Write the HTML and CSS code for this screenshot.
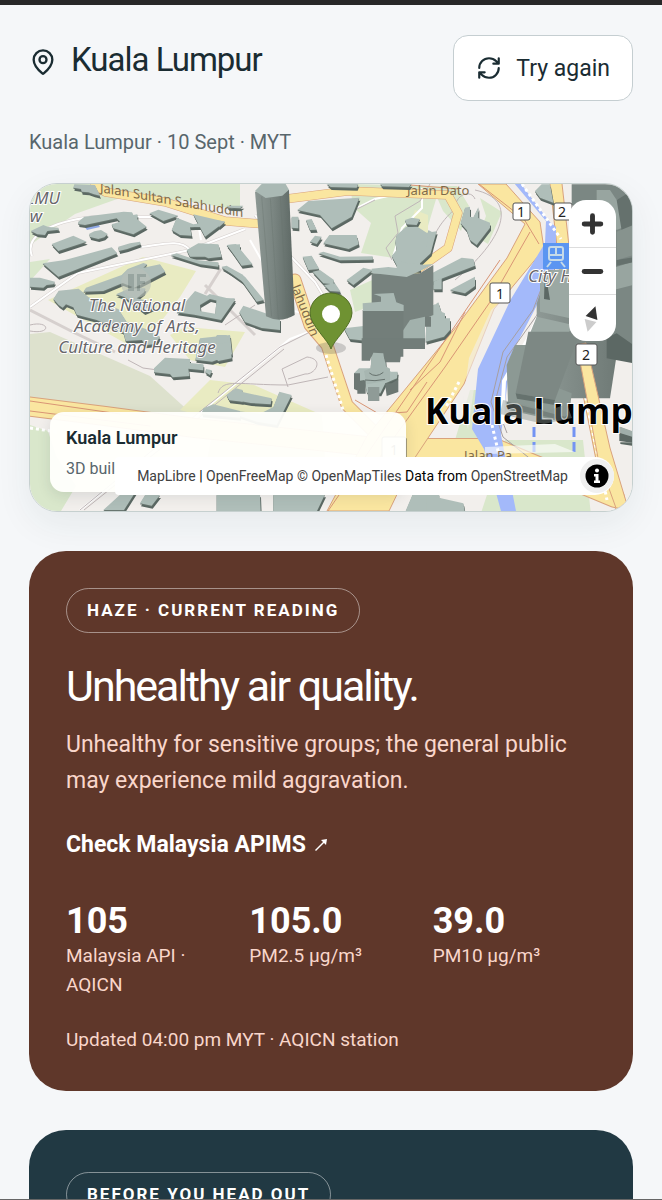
FILE: index.html
```html
<!DOCTYPE html>
<html lang="en">
<head>
<meta charset="utf-8">
<meta name="viewport" content="width=device-width, initial-scale=1">
<title>Kuala Lumpur air quality</title>
<link rel="stylesheet" href="styles.css">
</head>
<body>
<main class="page">
  <header class="header">
    <h1 class="title">
      <svg class="title-icon" viewBox="0 0 24 24" aria-hidden="true"><path d="M20 10c0 4.99-5.54 10.19-7.4 11.8a1 1 0 0 1-1.2 0C9.54 20.19 4 14.99 4 10a8 8 0 0 1 16 0"/><circle cx="12" cy="10" r="3"/></svg>
      Kuala Lumpur
    </h1>
    <button class="retry" type="button">
      <svg class="retry-icon" viewBox="0 0 24 24" aria-hidden="true"><path d="M3 12a9 9 0 0 1 9-9 9.75 9.75 0 0 1 6.74 2.74L21 8M21 3v5h-5M21 12a9 9 0 0 1-9 9 9.75 9.75 0 0 1-6.74-2.74L3 16M8 16H3v5"/></svg>
      Try again
    </button>
  </header>
  <p class="subtitle">Kuala Lumpur · 10 Sept · MYT</p>

  <section class="map" aria-label="Map of Kuala Lumpur">
    <svg class="map-canvas" viewBox="30 184 602 327" preserveAspectRatio="xMidYMid slice">
      <defs>
        <linearGradient id="tower" x1="0" x2="1"><stop offset="0" stop-color="#8c9793"/><stop offset=".45" stop-color="#7b8682"/><stop offset="1" stop-color="#5c6763"/></linearGradient>
        <linearGradient id="face" x1="0" x2="1"><stop offset="0" stop-color="#8e9995"/><stop offset="1" stop-color="#6f7a76"/></linearGradient>
        <g id="roofs">
          <g transform="translate(20 175) scale(.33333)">
            <path d="M163 28l62 2 15 32-18-4-17-6-20-2-2-8-23-4z"/>
            <path d="M175 140l18-15 118-15 25 2 4 8 12-2v15l28 22-24 14-16 9-60-18-5-12 25-8-10-10-95 20-20-3z"/>
            <path d="M388 115l27-11 60 18-45 16z"/><path d="M95 207l65-25 40 18-85 28z"/>
            <path d="M68 265l67-10 140-38 17 18-177 70z"/><path d="M208 176l15-7 20-4 20 12-10 10-18 5-25-6z"/>
            <path d="M455 165l15-37 50 20 20-3v10l-30 2 5 25-35-2zM520 118l95 22-60 45z"/>
            <path d="M500 225l35-20 60 3 10 37-40 5-10-5-45 0z"/><path d="M452 240l18-5 60 20 65 7v13l-55-7z"/>
            <path d="M605 275l15-3 50 28v22zM620 210l40-2v52zM295 215l35-10 30-5 2 8-40 14-25 6z"/>
            <path d="M32 168l38-18 15 6 30 2 2 6-35 4-7 12-23-2zM30 308l30 0 45 12-5 8-20 2-10 8-40-3z"/>
            <path d="M190 350l8-12 107-38 18-18 47-18 12 4-12 10 50-10 16 22-96 50 36 0-4 12-22 18 45 10 8 18-30 13-60-45-25-8 50-22-30-12-58 24z"/>
            <path d="M100 372l16-25 60-6 30 26 90 36 24 37 65 25 35 20-14 22-31 4-9-16-49 3-7-28-80-35-60-16-10-22-22-9-10 10-12-8z"/>
            <path fill-rule="evenodd" d="M470 412l55-64 36 14 8-5 76 18-42 60-80-16zm72-3l48 8 22-35-42-10-30 18z"/>
            <path d="M540 490l90-10 6 58-60 22-50-6z"/>
          </g>
          <g transform="translate(220 175) scale(.33333)">
            <path d="M232 105l33-27 153-10-23 57-60 35-35-40z"/><path d="M215 125l20 0v35l-20-2zM258 135l17-3 15 32-20 1zM270 200l15-18 20 3-15 22z"/>
            <path d="M310 205l18-25 82 0 6 28-30 14-66-15zM295 235l15-5 50 15 98-1v10l-98 2zM248 245l27-3 23 40-33 3zM278 290l22-5 42 30-2 13-30-3zM312 330l33-5 17 25-32-2z"/>
            <path d="M380 315l50-37 28 7-58 45zM22 210l26-3 50 61-33 4zM5 278l15-3 55 30 57 70-22 5-50-70zM-10 370l55 0-50 58-10-6zM-10 480l30 0 12 60h-42z"/>
            <path d="M20 92l50 0-10 8-34-2zM-10 135l25 5-18 16zM555 135l20-7 25 4-10 18-30-2zM58 412l12-20 110 38v35l-55-6-50-18z"/>
            <path d="M320 26l95 0-5 12-78-2zM480 26l95 0-8 10-80-2zM372 460l65-8v45l-48-5zM640 320l25-12v35l-25 0zM630 400l25-18 20 65-35 10z"/>
            <path d="M530 180l28-24 34-1 28 18 30-4-10 35-8 31-32 30v20l-65-5-20-37 15-18-4-25z"/>
          </g>
          <g transform="translate(430 175) scale(.33333)">
            <path d="M105 98l15-3v30l10 2 15-30 0 32 35 14 0 15-40 52-20-15-10-30-18-20zM-5 300l100-52 35 4 5 20-140 54zM60 345l75-40v28l-30 22zM315 48l20-20 25 0 10 55-40-15zM-10 400l25-12 0 15 30 12v15l15 0v35l-18 20-55 15z"/>
            <path d="M-5 165l18 10-8 35-15 5z"/>
          </g>
          <g transform="translate(20 345) scale(.33333)">
            <path d="M402 70l33-32 75 4v12l40 4v18l-45-5 3 22-50 4-8-10-48-5zM558 72l18 4-6 14-14-8zM620 150l28-20 20 5v35l-40-4zM550 190l30-12 80 20v20l-115-10z"/>
            <path d="M540 2l90-10 5 48-40 8zM250 495l60-55 40-5-38 60zM375 450l45 0-25 32-35-7z"/>
          </g>
          <g transform="translate(220 345) scale(.33333)">
            <path d="M22 152l18-17 115 25-3 18-60-4-65-12zM178 140l37 10-45 90-60-10-60-20 0-12 70 8 40-20zM-10 448l130 0 2 52h-132zM160 448h155l-25 52h-130zM578 448l80 2v50h-102z"/>
            <path d="M402 85l15-15 35 0 3-45 40 5 3 40 15 10 20 0-2 20-35 15-15 30-40-2-8-38-30 5z"/>
          </g>
          <g transform="translate(430 345) scale(.33333)"><path d="M568 245l50 20v30l-50-7zM-10 450l110 25 5 30h-115z"/></g>
        </g>
      </defs>
      <rect x="0" y="150" width="700" height="400" fill="#f2efec"/>

      <!-- parks and grounds -->
      <g fill="#d9e7cb">
        <path d="M30 184H240V210L180 200 120 198 75 214 30 245zM30 262l20-3-20 22z"/>
        <path d="M30 425l18 6 8 25 20 30-15 25H30zM350 184l90 2-12 40-34 32-33-5 10-30-18-16z"/>
        <path d="M350 290l40-18-3 28-32 12zM432 186l25 0 12 20-8 25-18-20zM480 198l22 14-14 32-10-6 8-22z"/>
        <path d="M455 440l15-50 20 0-20 75h-20zM505 440l78 0 8 75-110-2z"/>
      </g>
      <path d="M30 334l20-2 100 44 42 38H30z" fill="#dde1cd"/>
      <g fill="#e9ebc2"><path d="M48 300l95-43 53 14-16 26-35 45-20 1zM210 380l44 5 68 30 3 45-120 10 10-50-35-10zM190 360l-20-25 15-8 60 5-20 35zM405 240l10-30 13 5 0 30z"/></g>
      <path d="M84 226l14-2 2 3-13 3z" fill="#8fa8e6"/>

      <!-- small streets -->
      <g fill="none" stroke="#d6d0ce" stroke-width="3">
        <path d="M30 307L78 273 190 250 245 229M32 256c-8-20 18-34 60-39l60 0M190 250c-10-12-30-5-50-3M30 310L75 333 115 352M196 250l24 20-15 24M205 285l50 50M255 215l20 25 40 42 18 30"/>
      </g>
      <g fill="none" stroke="#fff" stroke-width="2">
        <path d="M30 307L78 273 190 250 245 229M32 256c-8-20 18-34 60-39l60 0M190 250c-10-12-30-5-50-3M80 510l80-64 130-107 40-15M196 210l5 30M250 240l40 70 40 10M255 215l20 25 40 42 18 30M345 214l30-15 30-7M392 260l10-32 20-20 0-20M560 395l5-60 20-50"/>
      </g>
      <g fill="none" stroke="#bfb6b7" stroke-width="1">
        <path d="M80 510l80-66 120-97 40-20M84 510l80-64 120-97M30 325c20-5 22 10 0 6M218 393c5-15 20-8 70-8l40-8M288 387l-6-18 25-12c18 2 8 18-2 17l-17 5M392 260l-6-12 12-15-3-17 25-15 10-17M345 215l30-15M430 254c0-15 10-32 25-45 0-15 16-20 20-10M475 190c45 10 28 50-20 90M255 305l-30 20M128 360l15 8 37 5 15-8"/>
      </g>

      <!-- main roads -->
      <g fill="none" stroke-linecap="round" stroke-linejoin="round">
        <g stroke="#d9a27c">
          <path stroke-width="9" d="M95 184l10 8 60 10 60 19 50 4M278 200l70-9 100 4 10 18-10 35-40 28"/>
          <path stroke-width="13" d="M295 280l15 45 17 20 20 60 25 25"/>
          <path stroke-width="20" d="M25 406l80 10 90 12 190 20 110 0 120 50"/>
          <path stroke-width="13" d="M556 184l9 80 15 85 25 125 20 40"/>
        </g>
        <g stroke="#fae6a0">
          <path stroke-width="8" d="M95 184l10 8 60 10 60 19 50 4M278 200l70-9 100 4 10 18-10 35-40 28"/>
          <path stroke-width="11" d="M295 280l15 45 17 20 20 60 25 25"/>
          <path stroke-width="18" d="M25 406l80 10 90 12 190 20 110 0 120 50"/>
          <path stroke-width="11" d="M556 184l9 80 15 85 25 125 20 40"/>
        </g>
        <path stroke="#d99575" d="M30 401l90 13M30 411l120 15M410 185l48 4"/>
      </g>
      <path d="M478 184l28 0 34 38 4 27-50 60-30 75-50 75-25 52h-62l40-75 90-110 50-68 18-34z" fill="#fae6a0" stroke="#d9a27c"/>
      <path d="M500 260L418 380l-90 131M530 232l-40 70-45 65-65 90M479 184l45 35 15 25M410 390l30-28 25-50" fill="none" stroke="#d99575"/>
      <path d="M355 400l24 14 28-2 20-30" fill="none" stroke="#d99575"/>

      <!-- river -->
      <path d="M510 184h11l28 37 7 6 0 38-20 42-25 48-10 80 15 76h-15l-17-62-12-20 6-60 33-70 34-56 1-22-32-38z" fill="#a3b9fa"/>
      <path d="M462 410l7-52 22-48 9-8-22 60-10 67z" fill="#f2efec" opacity=".6"/>
      <g fill="none" stroke="#a79fa0"><path d="M558 245l-25 65-30 42-12 50 12 35 40 32M562 250l-25 65-30 42-12 45 12 31"/><path stroke="#fff" stroke-width="4" d="M551 290l-23 49-24 42-2 43"/></g>
      <g stroke="#7393f3" stroke-width="3" stroke-dasharray="10 5"><path d="M534 427v33M574 427v33"/></g>
      <g fill="none" stroke="#fff" stroke-width="3" stroke-dasharray="3 3"><path d="M326 355l18 58M459 382l-13 25M30 428l28 4M522 184l39 55M600 350l32 7M492 425l7 30M582 380l25 120"/></g>
      <path d="M485 447l70-3 20 8-90 2z" fill="#fff" opacity=".6"/>

      <g class="road-label"><text transform="translate(100 192) skewY(10)">Jalan Sultan Salahuddin</text><text x="407" y="195">Jalan Dato</text><text transform="translate(291 287) rotate(68)">lahuddin</text><text x="464" y="460">Jalan Pa</text></g>

      <!-- building sides, then roofs -->
      <use href="#roofs" y="3" x="1" fill="#5b6863"/><use href="#roofs" y="1" fill="#697670"/><use href="#roofs" fill="#afbeb9"/>

      <g transform="translate(220 175) scale(.33333)">
        <path fill="url(#tower)" d="M105 50l33 374q42 22 86-4L207 45z"/>
        <path fill="none" stroke="#66716d" stroke-width="2" opacity=".5" d="M125 65l30 360M151 70l24 362M181 66l21 365"/>
        <path fill="#aab9b4" d="M105 48l20-21h72l10 17-20 18-50 7z"/>
        <path fill="#77827e" d="M455 295l145 0 40-25v150l-70 30-25 70h-90z"/>
        <path fill="#afbeb9" d="M530 258l25 5 55 6 30-2-32 17-48 22-105-12v-13l50-5 25 3z"/>
        <path fill="#a2b1ac" d="M540 480l30-45 45-10 0 95-75-10z"/>
        <path fill="#737e7a" d="M428 405h122v140h-122zM615 425h18v30h-18z"/>
        <path fill="#a9b8b3" d="M428 385l55-5v-15l-22-8 60-3 8 28 22 8v18l-122 0z"/>
      </g>
      <g transform="translate(220 345) scale(.33333)">
        <path fill="#727d79" d="M425-20h190v32l-70 0-5 40h-45l-5-22h-35l-5 17h-25z"/>
        <path fill="#6c7773" d="M402 85h18v55l-18-8zM412 112l25-6v40h-25zM495 115h20l20-12v38l-35 12z"/>
        <path fill="#a7b6b1" d="M455 35l5-12 30 2 5 38 15 8v35l-70 12-8-40 20-8z"/><path fill="none" stroke="#65706c" stroke-width="3" d="M448 84q20 16 42-2M435 105q30 5 60-2"/>
        <path fill="#8f9b97" d="M444 126h34v42h-34z"/>
      </g>
      <g transform="translate(430 175) scale(.33333)">
        <path fill="#7b8783" d="M425 28h185v500h-60l-25-40-5-300-95-100z"/>
        <path fill="#98a5a0" d="M500 45h40l20 30 50-20v90l-50 20-60-60zM530 285l80-25v70l-80 20z"/>
        <path fill="#65716d" d="M560 75l50-30v110l-35 12zM560 255l50-8v15l-50 10z"/>
        <path fill="#87938e" d="M560 170l50-20v90l-50 15z"/>
        <path fill="url(#face)" d="M320 385l35-100 110 5 65 160 30 90-20 130-220 0z"/>
        <path fill="#9ba8a3" d="M330 290l90-10v150l-90-20zM320 425l110 25-15 25-115 0z"/>
        <path fill="#5c6864" d="M345 285l15 90-18-3z"/>
        <path fill="#f2efec" d="M562 500l50 22v280h-50z"/>
        <path fill="#5c6864" d="M530 488l30-13 50 35v55l-80-15z"/>
      </g>
      <path d="M577 345l9-2 24 105 18 60h-12l-18-50z" fill="#fae6a0" stroke="#d9a27c"/>
      <g transform="translate(430 345) scale(.33333)">
        <path fill="#8c9994" d="M230 60l25-60h120l0 125 50 20-10 90-180-40z"/>
        <path fill="#7d8884" d="M295-40h155l-75 205-118-20z"/>
        <path fill="#66726e" d="M257 145l118 20-4 14-110-18zM230 170l175 45 15-15v30l-190-40z"/>
        <path fill="#5c6864" d="M568 245l50 20v30l-50-7z"/><path fill="#a0aeaa" d="M570 245l50 18v17l-50-16z"/>
      </g>

      <!-- station badge and road shields -->
      <rect x="543" y="243" width="26" height="26" fill="#5b95f1"/><g fill="none" stroke="#c6dae8" stroke-width="2"><rect x="549" y="247" width="14" height="13" rx="2"/><path d="M556 247v8M549 255h14M551 262l-4 5M561 262l4 5"/></g>
      <g fill="#fff" stroke="#555" stroke-width="1"><rect x="513" y="203" width="17" height="17" rx="2"/><rect x="554" y="203" width="18" height="17" rx="2"/><rect x="490" y="283" width="20" height="20" rx="2"/><rect x="576" y="344" width="21" height="21" rx="2"/><rect x="382" y="437" width="24" height="24" rx="2"/></g>
      <g class="shield"><text x="521" y="217">1</text><text x="562" y="217">2</text><text x="500" y="299">1</text><text x="586" y="360">2</text><text x="394" y="455">1</text></g>

      <g fill="#8a9590" opacity=".6"><circle cx="136" cy="283" r="15" fill="#b9c1b9"/><path d="M128 274h6v17h-6zM137 274h9v3h-6v4h5v3h-5v7h-3z"/></g>
      <g class="place">
        <text x="137" y="311">The National</text><text x="137" y="332">Academy of Arts,</text><text x="137" y="353">Culture and Heritage</text>
        <text x="43" y="204">LMU</text><text x="36" y="222">w</text><text x="550" y="282">City H</text>
      </g>
      <text class="city" x="425" y="424">Kuala Lump</text>
      <path d="M503 400l22 5 22 6 20-7 5 14-28 6-44-10z" fill="#87938e" opacity=".45"/>

      <!-- marker -->
      <ellipse cx="331" cy="348" rx="15" ry="6" fill="#555" opacity=".25"/>
      <path d="M331 349c-2-8-21-24-21-36a21 20 0 0 1 42 0c0 12-19 28-21 36z" fill="#6f9232" stroke="#526f27"/><circle cx="331" cy="314" r="9" fill="#fff"/>
    </svg>

    <div class="map-label"><strong class="map-name">Kuala Lumpur</strong><span class="map-note">3D buil</span></div>
    <div class="controls">
      <button class="control" type="button" aria-label="Zoom in"><svg viewBox="0 0 48 46"><path class="stroke" d="M24 15v17M15.500 23.500h17"/></svg></button>
      <button class="control" type="button" aria-label="Zoom out"><svg viewBox="0 0 48 46"><path class="stroke" d="M15.500 23.500h17"/></svg></button>
      <button class="control" type="button" aria-label="Reset bearing"><svg viewBox="0 0 48 46"><path fill="#333" d="M27 11l2 14-12-4z"/><path fill="#ccc" d="M16 24l12 3-9 10z"/></svg></button>
    </div>
    <div class="attribution">
      <span class="credits"><a href="#">MapLibre</a> | <a href="#">OpenFreeMap</a> <a href="#">© OpenMapTiles</a> Data from <a href="#">OpenStreetMap</a></span>
      <button class="info" type="button" aria-label="Toggle attribution"><svg viewBox="0 0 24 24"><circle cx="12" cy="12" r="11.500"/><circle cx="12" cy="6.500" r="2" fill="#fff"/><path fill="#fff" d="M9 10h4.500v6.500H15V19H9v-2.500h1.500v-4H9z"/></svg></button>
    </div>
  </section>

  <section class="card haze">
    <span class="pill">HAZE · CURRENT READING</span>
    <h2 class="headline">Unhealthy air quality.</h2>
    <p class="summary">Unhealthy for sensitive groups; the general public may experience mild aggravation.</p>
    <a class="source" href="#">Check Malaysia APIMS <svg class="source-icon" viewBox="0 0 14 14" aria-hidden="true"><path d="M1.500 12.500L11 3" fill="none" stroke="currentColor" stroke-width="1.500"/><path d="M13 1l-1 6-5-5z" fill="currentColor"/></svg></a>
    <dl class="stats">
      <div class="stat"><dt>Malaysia API · AQICN</dt><dd>105</dd></div>
      <div class="stat"><dt>PM2.5 µg/m³</dt><dd>105.0</dd></div>
      <div class="stat"><dt>PM10 µg/m³</dt><dd>39.0</dd></div>
    </dl>
    <p class="updated">Updated 04:00 pm MYT · AQICN station</p>
  </section>

  <section class="card advice"><span class="pill">BEFORE YOU HEAD OUT</span></section>
</main>
</body>
</html>
```
FILE: styles.css
```css
* { box-sizing: border-box; }
body {
  margin: 0;
  background: #f5f7f9;
  color: #1a2c32;
  font-family: Roboto, "Liberation Sans", sans-serif;
}
h1, h2, p, dl, dd { margin: 0; }
button { font: inherit; color: inherit; cursor: pointer; }
a { color: inherit; text-decoration: none; }

.page {
  display: flex;
  flex-direction: column;
  height: 100vh;
  overflow: hidden;
  padding: 30px 29px 0;
  border-top: 5px solid #282828;
  border-bottom: 1px solid #666;
}
.page > * { flex-shrink: 0; }

.header { display: flex; justify-content: space-between; align-items: flex-start; }
.title {
  display: flex;
  align-items: center;
  gap: 14px;
  font-size: 33px;
  line-height: 50px;
  font-weight: 400;
  letter-spacing: -1px;
}
.title-icon, .retry-icon { fill: none; stroke: currentColor; stroke-width: 2; stroke-linecap: round; stroke-linejoin: round; }
.title-icon { width: 28px; height: 30px; margin-top: 4px; }
.retry {
  display: flex;
  align-items: center;
  gap: 14px;
  height: 66px;
  padding: 0 22px;
  background: #fff;
  border: 1px solid #c5ced1;
  border-radius: 15px;
  font-size: 23px;
}
.retry-icon { width: 26px; height: 26px; }
.subtitle { margin-top: 26px; font-size: 20px; line-height: 30px; color: #58666c; }

.map {
  position: relative;
  height: 329px;
  margin-top: 26px;
  overflow: hidden;
  border: 1px solid #c6d0cf;
  border-radius: 28px;
  box-shadow: 0 12px 36px rgba(30, 50, 60, .07);
}
.map-canvas { display: block; width: 100%; height: 100%; }
.map-canvas text { font-family: "Noto Sans", sans-serif; }
.place { fill: #68676b; stroke: #fff; stroke-width: 2px; paint-order: stroke; font-size: 17px; font-style: italic; text-anchor: middle; }
.road-label { fill: #806b49; font-size: 13px; }
.shield { fill: #222; font-size: 14px; text-anchor: middle; }
.map-canvas .city { font-family: "Open Sans", sans-serif; font-size: 35px; font-weight: 700; fill: #000; stroke: #fff; stroke-width: 2px; paint-order: stroke; }

.map-label {
  position: absolute;
  left: 20px;
  bottom: 19px;
  display: grid;
  width: 356px;
  max-width: calc(100% - 40px);
  padding: 11px 16px 8px;
  background: rgba(255, 255, 252, .95);
  border-radius: 14px;
  box-shadow: 0 4px 14px rgba(30, 50, 60, .12);
}
.map-name { font-size: 18px; line-height: 30px; font-weight: 600; }
.map-note { font-size: 16px; line-height: 31px; color: #58666c; }
.controls {
  position: absolute;
  top: 16px;
  right: 16px;
  width: 47px;
  overflow: hidden;
  background: #fff;
  border-radius: 17px;
}
.control { display: block; width: 100%; height: 47px; padding: 0; border: 0; background: none; }
.control + .control { border-top: 1px solid #ddd; }
.control svg { display: block; width: 100%; height: 100%; }
.stroke { fill: none; stroke: #333; stroke-width: 5; stroke-linecap: round; }
.attribution {
  position: absolute;
  right: 18px;
  bottom: 16px;
  display: flex;
  align-items: center;
  gap: 12px;
  height: 38px;
  padding: 0 0 0 22px;
  background: #fff;
  border-radius: 4px 19px 19px 4px;
  font-size: 14px;
  color: #000;
  white-space: nowrap;
}
.attribution a { color: #404040; }
.info { display: grid; place-items: center; width: 34px; height: 34px; padding: 0; border: 0; border-radius: 50%; background: #f0f0f0; }
.info svg { width: 24px; height: 24px; }

.card { padding: 37px; border-radius: 37px; margin-top: 39px; color: #fff; }
.haze { background: #5f372a; }
.advice { background: #213943; padding-top: 42px; }
.pill {
  display: inline-block;
  padding: 0 20px;
  border: 1px solid rgba(255, 255, 255, .45);
  border-radius: 23px;
  font-size: 17px;
  line-height: 43px;
  font-weight: 700;
  letter-spacing: 2px;
}
.headline { margin-top: 29px; font-size: 43px; line-height: 48px; font-weight: 400; letter-spacing: -2px; }
.summary { margin-top: 17px; font-size: 23px; line-height: 36px; color: #f9d6cb; }
.source { display: flex; align-items: center; gap: 8px; margin-top: 29px; font-size: 23px; line-height: 34px; font-weight: 700; }
.source-icon { width: 14px; height: 14px; }
.stats { display: grid; grid-template-columns: repeat(3, 1fr); gap: 20px; margin-top: 39px; }
.stat { display: flex; flex-direction: column-reverse; justify-content: flex-end; }
.stat dd { font-size: 36px; line-height: 40px; font-weight: 700; }
.stat dt { font-size: 19px; line-height: 29px; color: #f9d6cb; }
.updated { margin-top: 26px; font-size: 19px; line-height: 29px; color: #f9d6cb; }
```
